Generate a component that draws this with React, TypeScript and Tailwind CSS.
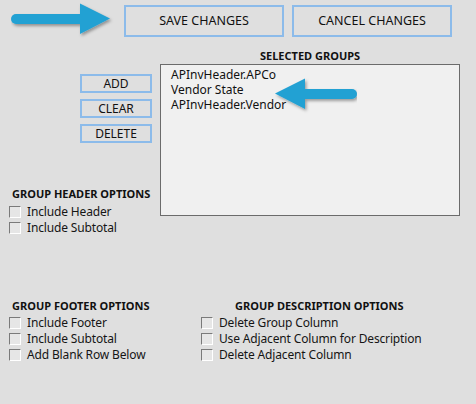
import type { ReactNode } from "react";

const GROUPS = ["APInvHeader.APCo", "Vendor State", "APInvHeader.Vendor"];

// blue callout arrow, drawn pointing right; `len` is tail-to-tip length
function Pointer({ len, id, flip = false }: { len: number; id: string; flip?: boolean }) {
    const w = len + 8;
    const base = len - 30;
    return (
        <svg width={w} height="42" viewBox={`0 0 ${w} 42`} className={flip ? "-scale-x-100" : ""}>
            <defs>
                <filter id={id} x="-10%" y="-20%" width="130%" height="160%">
                    <feDropShadow dx={flip ? -1.5 : 1.5} dy="2" stdDeviation="1.6" floodColor="#000" floodOpacity="0.35" />
                </filter>
            </defs>
            <g filter={`url(#${id})`}>
                <path d={`M5 15 H${base + 2} V25 H5 A5 5 0 0 1 5 15 Z`} fill="#22a1d3" />
                <path d={`M${base} 4.5 L${len} 19.5 L${base} 35 Z`} fill="#22a1d3" />
            </g>
        </svg>
    );
}

function OutlineButton({ children, className }: { children: ReactNode; className: string }) {
    return (
        <div className={`flex items-center justify-center border-2 border-[#8cbbea] text-[#111] ${className}`}>
            {children}
        </div>
    );
}

function Check({ label }: { label: string }) {
    return (
        <div className="flex h-[16px] items-center gap-[6px]">
            <span className="h-[12px] w-[12px] border border-t-[#7a7a7a] border-l-[#7a7a7a] border-b-white border-r-white bg-[#e6e6e6]" />
            <span className="text-[12px] tracking-[-0.15px] leading-[16px] text-[#151515]">{label}</span>
        </div>
    );
}

function Heading({ children, className = "" }: { children: ReactNode; className?: string }) {
    return <div className={`text-[11px] font-bold leading-[14px] text-[#111] ${className}`}>{children}</div>;
}

export default function App() {
    return (
        <div
            className="relative h-[404px] w-[476px] overflow-hidden bg-[#dfdfdf]"
            style={{ fontFamily: '"Noto Sans", "Open Sans", sans-serif' }}>
            {/* save / cancel */}
            <div className="flex gap-[8px] pl-[124px] pt-[5px]">
                <OutlineButton className="h-[32px] w-[160px] text-[12.5px]">SAVE CHANGES</OutlineButton>
                <OutlineButton className="h-[32px] w-[160px] text-[12.5px]">CANCEL CHANGES</OutlineButton>
            </div>

            <div className="mt-[12px] flex">
                {/* action buttons + header options */}
                <div className="w-[160px] pt-[25px]">
                    <div className="flex flex-col gap-[6px] pl-[80px]">
                        <OutlineButton className="h-[19px] w-[72px] text-[12px]">ADD</OutlineButton>
                        <OutlineButton className="h-[19px] w-[72px] text-[12px]">CLEAR</OutlineButton>
                        <OutlineButton className="h-[19px] w-[72px] text-[12px]">DELETE</OutlineButton>
                    </div>
                    <Heading className="mt-[44px] pl-[12px]">GROUP HEADER OPTIONS</Heading>
                    <div className="mt-[3px] pl-[9px]">
                        <Check label="Include Header" />
                        <Check label="Include Subtotal" />
                    </div>
                </div>

                {/* selected groups list */}
                <div className="w-[300px]">
                    <Heading className="pl-[100px]">SELECTED GROUPS</Heading>
                    <div className="mt-px h-[152px] border border-[#6b6b6b] bg-[#f0f0f0] pl-[10px] pt-[2px]">
                        {GROUPS.map((g) => (
                            <div key={g} className="text-[12px] leading-[15px] text-[#111]">
                                {g}
                            </div>
                        ))}
                    </div>
                </div>
            </div>

            {/* footer + description options */}
            <div className="mt-[63px] flex">
                <div className="w-[192px] pl-[9px]">
                    <Heading className="pl-[3px]">GROUP FOOTER OPTIONS</Heading>
                    <div className="mt-[2px]">
                        <Check label="Include Footer" />
                        <Check label="Include Subtotal" />
                        <Check label="Add Blank Row Below" />
                    </div>
                </div>
                <div className="pl-[9px]">
                    <Heading className="pl-[34px]">GROUP DESCRIPTION OPTIONS</Heading>
                    <div className="mt-[2px]">
                        <Check label="Delete Group Column" />
                        <Check label="Use Adjacent Column for Description" />
                        <Check label="Delete Adjacent Column" />
                    </div>
                </div>
            </div>

            {/* callout arrows */}
            <div className="absolute left-[11px] top-[-1px]">
                <Pointer len={99} id="arrowSave" />
            </div>
            <div className="absolute left-[267px] top-[74px]">
                <Pointer len={82} id="arrowList" flip />
            </div>
        </div>
    );
}
